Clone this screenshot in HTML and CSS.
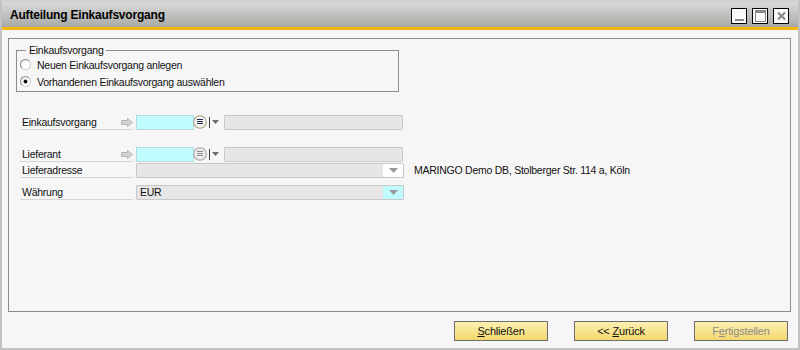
FILE: index.html
```html
<!DOCTYPE html>
<html lang="de">
<head>
<meta charset="utf-8">
<title>Aufteilung Einkaufsvorgang</title>
<link rel="stylesheet" href="styles.css">
</head>
<body>
<div class="window">
  <div class="titlebar">
    <span class="title">Aufteilung Einkaufsvorgang</span>
    <div class="winbtns">
      <span class="wbtn"><svg width="13" height="14" viewBox="0 0 13 14"><rect x="2" y="10" width="9" height="2" fill="#8a8a8a"/></svg></span>
      <span class="wbtn"><svg width="13" height="14" viewBox="0 0 13 14"><rect x="1.5" y="1.5" width="10" height="11" fill="none" stroke="#8a8a8a"/><rect x="1" y="1" width="11" height="3" fill="#8a8a8a"/></svg></span>
      <span class="wbtn"><svg width="13" height="14" viewBox="0 0 13 14"><path d="M3 3.5 L10 10.5 M10 3.5 L3 10.5" stroke="#8a8a8a" stroke-width="2.2"/></svg></span>
    </div>
  </div>
  <div class="accent"></div>
  <div class="client">
    <div class="panel">
      <fieldset class="group">
        <legend>Einkaufsvorgang</legend>
        <label class="radio"><span class="rb"></span>Neuen Einkaufsvorgang anlegen</label>
        <label class="radio"><span class="rb on"></span>Vorhandenen Einkaufsvorgang auswählen</label>
      </fieldset>

      <div class="row first">
        <div class="lbl"><span>Einkaufsvorgang</span><svg class="arrow" width="12" height="9" viewBox="0 0 12 9"><path d="M0.5 2.5 H6.5 V0.5 L11.5 4.5 L6.5 8.5 V6.5 H0.5 Z" fill="#d4d4d4" stroke="#b4b4b4"/></svg></div>
        <div class="code"></div>
        <span class="cfl"><svg width="14" height="14" viewBox="0 0 14 14"><circle cx="7" cy="7" r="6.3" fill="#f6f4ee" stroke="#a89e88" stroke-width="1.1"/><path d="M4 4.5 H10 M4 6.5 H10 M4 8.5 H10" stroke="#1e2a55" stroke-width="1" shape-rendering="crispEdges"/></svg></span>
        <span class="sep"></span>
        <svg class="tri" width="7" height="5" viewBox="0 0 7 5"><path d="M0 0 H7 L3.5 4 Z" fill="#6a6a6a"/></svg>
        <div class="name"></div>
      </div>

      <div class="row second">
        <div class="lbl"><span>Lieferant</span><svg class="arrow" width="12" height="9" viewBox="0 0 12 9"><path d="M0.5 2.5 H6.5 V0.5 L11.5 4.5 L6.5 8.5 V6.5 H0.5 Z" fill="#d4d4d4" stroke="#b4b4b4"/></svg></div>
        <div class="code"></div>
        <span class="cfl"><svg width="14" height="14" viewBox="0 0 14 14"><circle cx="7" cy="7" r="6.3" fill="#ededed" stroke="#a4a4a4" stroke-width="1.1"/><path d="M4 4.5 H10 M4 6.5 H10 M4 8.5 H10" stroke="#8a8a8a" stroke-width="1" shape-rendering="crispEdges"/></svg></span>
        <span class="sep"></span>
        <svg class="tri" width="7" height="5" viewBox="0 0 7 5"><path d="M0 0 H7 L3.5 4 Z" fill="#6a6a6a"/></svg>
        <div class="name"></div>
      </div>

      <div class="row">
        <div class="lbl"><span>Lieferadresse</span></div>
        <div class="combo"><span class="val"></span><span class="drop white"><svg width="9" height="5" viewBox="0 0 9 5"><path d="M0 0 H9 L4.5 5 Z" fill="#9a9a9a"/></svg></span></div>
        <span class="addr">MARINGO Demo DB, Stolberger Str. 114 a, Köln</span>
      </div>

      <div class="row third">
        <div class="lbl"><span>Währung</span></div>
        <div class="combo"><span class="val">EUR</span><span class="drop cyan"><svg width="9" height="5" viewBox="0 0 9 5"><path d="M0 0 H9 L4.5 5 Z" fill="#9a9a9a"/></svg></span></div>
      </div>
    </div>

    <div class="buttons">
      <button class="btn"><u>S</u>chließen</button>
      <button class="btn">&lt;&lt; <u>Z</u>urück</button>
      <button class="btn disabled">F<u>e</u>rtigstellen</button>
    </div>
  </div>
</div>
</body>
</html>
```

FILE: styles.css
```css
* { box-sizing: border-box; }
html, body { margin: 0; padding: 0; background: #f6f6f6; }
body {
  font-family: "Liberation Sans", Arial, sans-serif;
  font-size: 10.5px;
  letter-spacing: -0.25px;
  color: #111;
}
.window {
  width: 800px;
  height: 350px;
  border: 2px solid #c2c2c2;
  border-top-color: #d0d0d0;
  background: #f6f6f6;
  display: flex;
  flex-direction: column;
}
.titlebar {
  height: 25px;
  background: linear-gradient(#d9d9d9, #a9a9a6);
  display: flex;
  align-items: center;
  justify-content: space-between;
  padding: 0 9px 0 8px;
}
.title {
  font-weight: bold;
  font-size: 12px;
  letter-spacing: -0.2px;
  color: #000;
  margin-top: 1px;
}
.winbtns { display: flex; gap: 5px; margin-top: 3px; }
.wbtn {
  width: 16px;
  height: 16px;
  border: 1px solid #000;
  background: #fafafa;
  display: flex;
  align-items: center;
  justify-content: center;
}
.accent { height: 3px; background: #f7b60d; }
.client {
  flex: 1;
  display: flex;
  flex-direction: column;
  padding: 8px 7px 0 6px;
}
.panel {
  height: 274px;
  border: 1px solid #8c8c8c;
  padding: 5px 0 0 7px;
}
.group {
  width: 383px;
  height: 48px;
  margin: 0;
  padding: 0 0 0 3px;
  border: 1px solid #8c8c8c;
}
.group legend {
  padding: 0 3px;
  margin-left: 6px;
  line-height: 12px;
}
.radio {
  display: flex;
  align-items: center;
  height: 17px;
  gap: 6px;
}
.rb {
  width: 11px;
  height: 11px;
  border-radius: 50%;
  border: 1px solid #8e8e8e;
  border-bottom-color: #d4d4d4;
  border-right-color: #cfcfcf;
  background: radial-gradient(circle at 60% 60%, #ffffff 35%, #dedede 100%);
  position: relative;
  display: inline-block;
}
.rb.on::after {
  content: "";
  position: absolute;
  left: 3px;
  top: 3px;
  width: 3px;
  height: 3px;
  border-radius: 50%;
  background: #000;
  box-shadow: 0 0 0 0.5px #333;
}
.row {
  display: flex;
  align-items: center;
  height: 16px;
  margin-left: 4px;
}
.row.first { margin-top: 22px; }
.row.second { margin-top: 16px; }
.row.third { margin-top: 6px; }
.lbl {
  width: 113px;
  height: 16px;
  border-bottom: 1px solid #d6d6d6;
  display: flex;
  align-items: center;
  justify-content: space-between;
  padding-left: 2px;
  margin-right: 3px;
}
.arrow { margin-top: 1px; }
.code {
  width: 58px;
  height: 15px;
  background: #c0fbfd;
  border: 1px solid #b8d8dc;
}
.cfl { display: flex; margin-left: -1px; }
.sep {
  width: 1px;
  height: 11px;
  background: #444;
  margin-left: 2px;
}
.tri { margin-left: 2px; }
.name {
  width: 179px;
  height: 15px;
  margin-left: 5px;
  background: #e6e6e6;
  border: 1px solid #c8c8c8;
  border-radius: 1px;
}
.combo {
  width: 268px;
  height: 15px;
  background: #e6e6e6;
  border: 1px solid #c8c8c8;
  border-radius: 1px;
  display: flex;
  justify-content: space-between;
  align-items: stretch;
}
.val { padding-left: 3px; line-height: 13px; }
.drop {
  width: 20px;
  display: flex;
  align-items: center;
  justify-content: center;
}
.drop.white { background: #fff; }
.drop.cyan { background: #c0fbfd; }
.addr { margin-left: 10px; color: #111; }
.buttons {
  display: flex;
  justify-content: flex-end;
  gap: 26px;
  margin-top: 9px;
  padding-right: 3px;
}
.btn {
  width: 94px;
  height: 20px;
  font-family: inherit;
  font-size: 11px;
  letter-spacing: -0.2px;
  color: #111;
  border: 1px solid #6c6c6c;
  background: linear-gradient(#fdf0b2, #f4d86e);
  padding: 0;
  cursor: default;
}
.btn.disabled { color: #8c8c8c; }
```
